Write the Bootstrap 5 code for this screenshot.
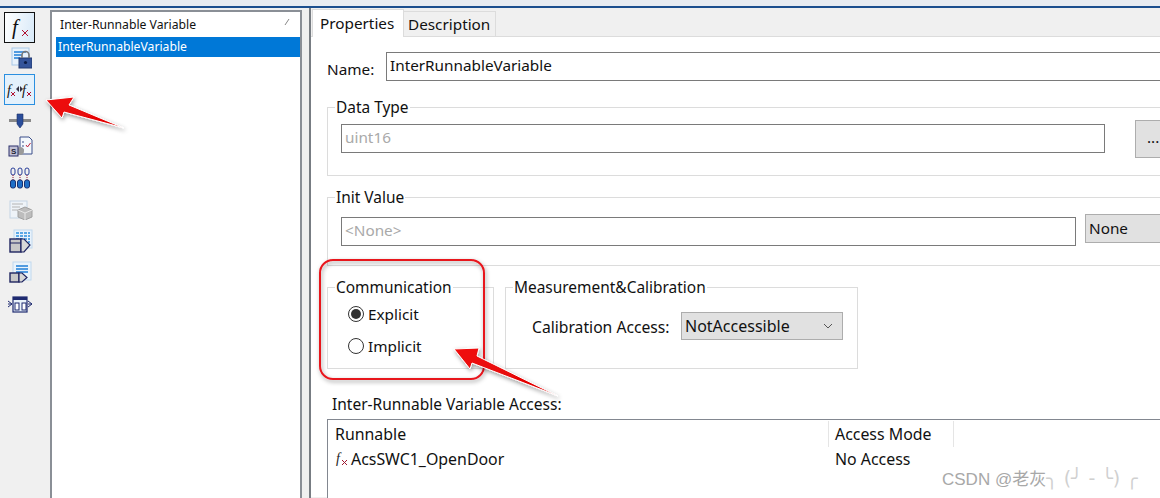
<!DOCTYPE html>
<html lang="en">
<head>
<meta charset="utf-8">
<title>Inter-Runnable Variable</title>
<link href="https://cdn.jsdelivr.net/npm/bootstrap@5.3.3/dist/css/bootstrap.min.css" rel="stylesheet">
<style>
html, body { height: 100%; }
body { width: 1160px; height: 498px; overflow: hidden; position: relative; background: #f0f0f0; color: #111;
  font-family: "Noto Sans", "Noto Sans CJK SC", sans-serif; font-size: 15.3px; line-height: 20px; }
.title-strip { height: 8px; background: #e8ecf2; border-bottom: 2px solid #1c4f8f; }
.work { height: 490px; }
.tool-rail { width: 50px; flex: none; padding: 4px 0 0 4px; }
.tool-btn { width: 31px; height: 31px; display: flex; align-items: center; justify-content: center; }
.tool-btn.picked { border: 1px solid #111; background: linear-gradient(100deg, #fff, #d8e9f8); }
.tool-btn.hot { border: 1px solid #2a8fe0; background: #e3f1fc; margin-top: 5px; }
.tool-ico { display: block; margin-left: 4px; }
.tree-pane { width: 252px; flex: none; background: #fff; border: 1px solid #8a8f96; border-width: 2px 2px 0 2px; margin: 2px 8px 0 0; padding: 2px 0 0 4px; font-size: 12.2px; line-height: 22px; }
.tree-head { padding-left: 4px; display: flex; justify-content: space-between; padding-right: 10px; height: 23px; }
.tree-pick { background: #0078d7; color: #fff; padding-left: 2px; height: 20px; line-height: 20px; }
.prop-pane { width: 900px; flex: none; border-left: 2px solid #777c82; margin-left: -1px; }
.tab-strip { height: 29px; padding: 2px 0 0 1px; border-bottom: 1px solid #dcdcdc; display: flex; align-items: flex-end; }
.tab-on { width: 92px; height: 28px; background: #fff; border: 1px solid #dcdcdc; border-bottom: 0; padding: 3px 0 0 7px; margin-bottom: -1px; position: relative; }
.tab-off { width: 92px; height: 25px; border: 1px solid #dcdcdc; border-bottom: 0; border-left: 0; padding: 2px 0 0 4px; background: #f0f0f0; }
.prop-body { background: #fff; height: 460px; padding: 15px 0 0 16px; width: 900px; }
.name-row { height: 29px; }
.name-lbl { width: 59px; padding-top: 7px; }
.txt-box { border: 1px solid #7a7a7a; background: #fff; height: 29px; padding: 2px 3px; }
.txt-box.off { color: #a9a9a9; }
.grp { position: relative; border: 1px solid #dcdcdc; }
.grp-title { position: absolute; top: -11px; left: 7px; background: #fff; padding: 0 1px; line-height: 20px; white-space: nowrap; font-size: 15.45px; }
.grp-type { height: 69px; margin-top: 26px; padding: 16px 0 0 13px; }
.grp-init { height: 69px; margin-top: 21px; padding: 19px 0 0 13px; }
.box-wide-a { width: 764px; }
.box-wide-b { width: 735px; }
.dots-btn { width: 60px; height: 38px; background: #e1e1e1; border: 1px solid #adadad; margin: -4px 0 0 30px; padding-left: 11px; line-height: 32px; }
.none-box { width: 100px; height: 29px; background: #e1e1e1; border: 1px solid #adadad; margin: -3px 0 0 9px; padding: 3px; }
.low-row { margin-top: 21px; height: 82px; }
.grp-comm { width: 167px; height: 82px; padding: 10px 0 0 20px; }
.grp-meas { width: 353px; height: 82px; margin-left: 11px; padding: 24px 0 0 26px; }
.radio-row { height: 32px; display: flex; align-items: center; gap: 4px; }
.radio-dot { width: 16px; height: 16px; border-radius: 50%; border: 1px solid #333; background: #fff; display: flex; align-items: center; justify-content: center; }
.radio-dot.set::after { content: ""; width: 10px; height: 10px; border-radius: 50%; background: #333; }
.cal-lbl { width: 149px; padding-top: 5px; font-size: 15.7px; }
.cal-box { width: 162px; height: 28px; background: #e1e1e1; border: 1px solid #adadad; padding: 3px; display: flex; justify-content: space-between; font-size: 16px; }
.cal-chev { margin: 7px 6px 0 0; }
.acc-title { margin: 25px 0 0 5px; height: 20px; font-size: 15.5px; }
.acc-box { margin-top: 5px; height: 90px; border: 1px solid #828790; border-right: 0; background: #fff; padding: 1px 0 0 7px; font-size: 15.9px; }
.acc-head { height: 26px; display: flex; align-items: center; }
.acc-h1 { width: 494px; height: 26px; line-height: 26px; border-right: 1px solid #e5e5e5; }
.acc-h2 { width: 125px; height: 26px; line-height: 26px; padding-left: 6px; border-right: 1px solid #e5e5e5; }
.acc-row { display: flex; height: 24px; line-height: 24px; }
.acc-c1 { width: 494px; display: flex; align-items: center; gap: 1px; }
.acc-c2 { padding-left: 6px; }
.paint-layer { position: absolute; left: 0; top: 0; pointer-events: none; }
.mark-stamp { position: absolute; left: 942px; top: 467px; color: #a8a8a8; font-size: 17px; line-height: 22px; white-space: nowrap; font-family: "Liberation Sans", "Noto Sans CJK SC", sans-serif; }
.mark-stamp span { font-family: "DejaVu Sans", sans-serif; color: #d0d0d0; font-size: 19px; }
</style>
</head>
<body>
<div class="title-strip"></div>
<div class="work d-flex">

  <div class="tool-rail">
    <div class="tool-btn picked">
      <svg width="24" height="24" viewBox="0 0 24 24"><text x="4" y="18" font-family="Liberation Serif" font-style="italic" font-size="21" fill="#111">f</text><path d="M14 14l6 6M20 14l-6 6" stroke="#b01030" stroke-width="1" fill="none"/></svg>
    </div>
    <svg class="tool-ico" style="margin-top:4px" width="24" height="22" viewBox="0 0 24 22"><rect x="4" y="1" width="17" height="17" fill="#e8f2fb" stroke="#a8c8e8"/><path d="M6 5h12M6 8h8M6 11h6" stroke="#1f7fd8" stroke-width="1.4"/><rect x="11" y="11" width="13" height="10" fill="#34549a" stroke="#223a70"/><path d="M14 11V8a3.500 3.500 0 0 1 7 0v3" fill="none" stroke="#777" stroke-width="1.600"/><circle cx="17.500" cy="15.500" r="1.600" fill="#0c1c44"/></svg>
    <div class="tool-btn hot">
      <svg width="29" height="22" viewBox="0 0 29 22"><text x="2" y="16" font-family="Liberation Serif" font-style="italic" font-size="14" fill="#111">f</text><text x="17" y="16" font-family="Liberation Serif" font-style="italic" font-size="14" fill="#111">f</text><path d="M6 13l4 4M10 13l-4 4M22 13l4 4M26 13l-4 4" stroke="#b01030"/><path d="M11 10l3-3v6zM18 10l-3-3v6z" fill="#334"/></svg>
    </div>
    <svg class="tool-ico" style="margin-top:8px" width="24" height="16" viewBox="0 0 24 16"><rect x="1" y="6" width="22" height="3" fill="#8a8a8a"/><path d="M9 1h6v10l-3 4-3-4z" fill="#2a4d9a" stroke="#1b2f66" stroke-width=".6"/></svg>
    <svg class="tool-ico" style="margin-top:7px" width="26" height="21" viewBox="0 0 26 21"><path d="M12 1h9l3 3v14H12z" fill="#f4f8fc" stroke="#3a4f8a"/><path d="M14 6h2M14 10h2M14 14h2" stroke="#3a4f8a"/><path d="M18 9l1.500 2 3-4" stroke="#c0203a" fill="none"/><circle cx="12" cy="15" r="4" fill="#9a9a9a"/><rect x="1" y="10" width="9" height="10" fill="#c0c0d4" stroke="#2a2f6a"/><text x="3" y="18" font-size="8" font-family="Liberation Sans" font-weight="700" fill="#223">S</text></svg>
    <svg class="tool-ico" style="margin-top:10px;margin-left:5px" width="22" height="22" viewBox="0 0 22 22"><g fill="none" stroke="#2a3f9a"><rect x="2" y="1" width="4" height="7" rx="2"/><rect x="9" y="1" width="4" height="7" rx="2"/><rect x="16" y="1" width="4" height="7" rx="2"/></g><g stroke="#a01830" stroke-dasharray="1 1"><path d="M4 8v5M11 8v5M18 8v5"/></g><g fill="#1f6fc8" stroke="#1a2f70"><rect x="1.500" y="13" width="5" height="8" rx="2"/><rect x="8.500" y="13" width="5" height="8" rx="2"/><rect x="15.500" y="13" width="5" height="8" rx="2"/></g></svg>
    <svg class="tool-ico" style="margin-top:11px;margin-left:5px" width="24" height="20" viewBox="0 0 24 20"><rect x="1" y="1" width="17" height="17" fill="#eef3f8" stroke="#c4d4e4"/><path d="M3 4h11M3 7h8M3 10h6" stroke="#b4b4b4"/><path d="M9 10l7-3 7 3v7l-7 3-7-3z" fill="#bdbdbd" stroke="#a0a0a0"/><path d="M9 10l7 3 7-3M16 13v7" stroke="#e8e8e8" fill="none"/></svg>
    <svg class="tool-ico" style="margin-top:9px;margin-left:5px" width="24" height="24" viewBox="0 0 24 24"><rect x="5" y="1" width="18" height="18" fill="#e8f2fb" stroke="#c0d8ee"/><path d="M7 4h14M7 7h14M7 10h14M7 13h14" stroke="#2a90e0" stroke-dasharray="3 1" stroke-width="1.300"/><rect x="1" y="10" width="11" height="13" fill="#c8c8c8" stroke="#1e2460" stroke-width="1.400"/><path d="M1 14h11" stroke="#1e2460"/><path d="M12 10h3l6 6-6 7h-3z" fill="#d8d8d8" stroke="#1e2460" stroke-width="1.200"/></svg>
    <svg class="tool-ico" style="margin-top:8px;margin-left:5px" width="24" height="22" viewBox="0 0 24 22"><rect x="4" y="1" width="18" height="18" fill="#eaf3fb" stroke="#c0d8ee"/><path d="M7 5h12M7 8h12M7 11h12" stroke="#1f7fd8" stroke-width="1.300"/><rect x="1" y="12" width="9" height="9" fill="#c8c8c8" stroke="#1e2460" stroke-width="1.400"/><path d="M10 12h3l5 4.500-5 4.500h-3z" fill="#d8d8d8" stroke="#1e2460" stroke-width="1.200"/></svg>
    <svg class="tool-ico" style="margin-top:13px;margin-left:3px" width="26" height="17" viewBox="0 0 26 17"><rect x="6" y="1" width="14" height="15" fill="#eaf3fb" stroke="#1e2a70" stroke-width="1.200"/><rect x="6" y="1" width="14" height="3" fill="#1e2a70"/><rect x="8" y="7" width="4" height="7" fill="#fff" stroke="#1e2a70"/><rect x="15" y="7" width="4" height="7" fill="#fff" stroke="#1e2a70"/><path d="M1 5l4 3-4 3M1 8h4M21 5l4 3-4 3M21 8h4" fill="none" stroke="#1e2a70"/></svg>
  </div>

  <div class="tree-pane">
    <div class="tree-head"><span>Inter-Runnable Variable</span><svg width="6" height="8" viewBox="0 0 6 8" class="mt-1"><path d="M1 7l4-6" stroke="#888"/></svg></div>
    <div class="tree-pick">InterRunnableVariable</div>
  </div>

  <div class="prop-pane">
    <div class="tab-strip">
      <div class="tab-on">Properties</div>
      <div class="tab-off">Description</div>
    </div>
    <div class="prop-body">
      <div class="name-row d-flex">
        <div class="name-lbl">Name:</div>
        <div class="txt-box flex-grow-1">InterRunnableVariable</div>
      </div>

      <div class="grp grp-type d-flex">
        <div class="grp-title">Data Type</div>
        <div class="txt-box off box-wide-a">uint16</div>
        <div class="dots-btn">...</div>
      </div>

      <div class="grp grp-init d-flex">
        <div class="grp-title">Init Value</div>
        <div class="txt-box off box-wide-b">&lt;None&gt;</div>
        <div class="none-box">None</div>
      </div>

      <div class="low-row d-flex">
        <div class="grp grp-comm">
          <div class="grp-title">Communication</div>
          <div class="radio-row"><span class="radio-dot set"></span>Explicit</div>
          <div class="radio-row"><span class="radio-dot"></span>Implicit</div>
        </div>
        <div class="grp grp-meas d-flex">
          <div class="grp-title">Measurement&amp;Calibration</div>
          <div class="cal-lbl">Calibration Access:</div>
          <div class="cal-box">NotAccessible
            <svg class="cal-chev" width="10" height="6" viewBox="0 0 10 6"><path d="M1 1l4 4 4-4" fill="none" stroke="#555"/></svg>
          </div>
        </div>
      </div>

      <div class="acc-title">Inter-Runnable Variable Access:</div>
      <div class="acc-box">
        <div class="acc-head"><div class="acc-h1">Runnable</div><div class="acc-h2">Access Mode</div></div>
        <div class="acc-row">
          <div class="acc-c1"><svg width="15" height="16" viewBox="0 0 15 16"><text x="1" y="12" font-family="Liberation Serif" font-style="italic" font-size="14" fill="#222">f</text><path d="M7 9l5 5M12 9l-5 5" stroke="#a01830"/></svg>AcsSWC1_OpenDoor</div>
          <div class="acc-c2">No Access</div>
        </div>
      </div>
    </div>
  </div>
</div>

<svg class="paint-layer" width="1160" height="498" viewBox="0 0 1160 498">
  <defs>
    <filter id="softShade" x="-20%" y="-20%" width="140%" height="140%"><feDropShadow dx="1" dy="2" stdDeviation="2" flood-color="#000" flood-opacity=".4"/></filter>
    <linearGradient id="redFill" x1="0" y1="0" x2="1" y2="1"><stop offset="0" stop-color="#f01010"/><stop offset="1" stop-color="#e00000"/></linearGradient>
  </defs>
  <rect x="320" y="260" width="164" height="119" rx="13" fill="none" stroke="#e8141c" stroke-width="2" filter="url(#softShade)"/>
  <polygon points="46,100 74,97 69,105 124,128 64,112 62,118" fill="url(#redFill)" stroke="#fff" stroke-width="1" filter="url(#softShade)"/>
  <polygon points="454,349 479,348 477,356 558,396 472,363 470,369" fill="url(#redFill)" stroke="#fff" stroke-width="1" filter="url(#softShade)"/>
</svg>
<div class="mark-stamp">CSDN @老灰<span>╮ (╯ - ╰) ╭</span></div>
</body>
</html>
